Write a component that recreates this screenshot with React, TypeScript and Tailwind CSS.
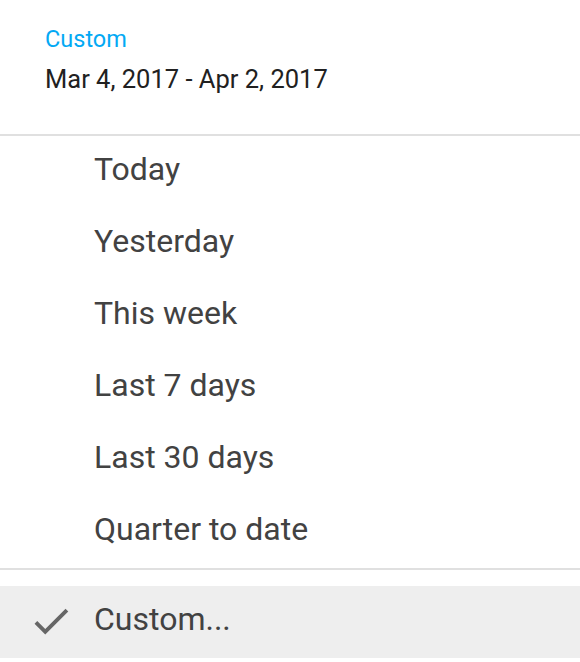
import React from "react";

const presets = ["Today", "Yesterday", "This week", "Last 7 days", "Last 30 days", "Quarter to date"];

function CheckIcon() {
  return (
    <svg width="46" height="46" viewBox="0 0 24 24" className="shrink-0 mt-[12px]">
      <path d="M9 16.17L4.83 12l-1.42 1.41L9 19 21 7l-1.41-1.41z" fill="#666666" />
    </svg>
  );
}

export default function App() {
  return (
    <div className="w-[580px] h-[662px] bg-white overflow-hidden" style={{ fontFamily: "Roboto, 'Noto Sans', sans-serif" }}>
      <div className="h-[136px] pl-[45px] pt-[25px] border-b-2 border-[#e0e0e0]">
        <div className="text-[23.5px] leading-[28px] text-[#03a9f4]">Custom</div>
        <div className="mt-[11px] text-[25.5px] leading-[30px] text-[#212121]">Mar 4, 2017 - Apr 2, 2017</div>
      </div>
      <div className="border-b-2 border-[#e0e0e0]">
        {presets.map((p) => (
          <div key={p} className="h-[72px] pt-[15px] pl-[94px] text-[32px] leading-[36px] text-[#424242]">
            {p}
          </div>
        ))}
      </div>
      <div className="mt-[16px] h-[72px] bg-[#eeeeee] flex items-start pl-[28px]">
        <CheckIcon />
        <span className="ml-[20px] pt-[15px] text-[32px] leading-[36px] text-[#424242]">Custom...</span>
      </div>
    </div>
  );
}
